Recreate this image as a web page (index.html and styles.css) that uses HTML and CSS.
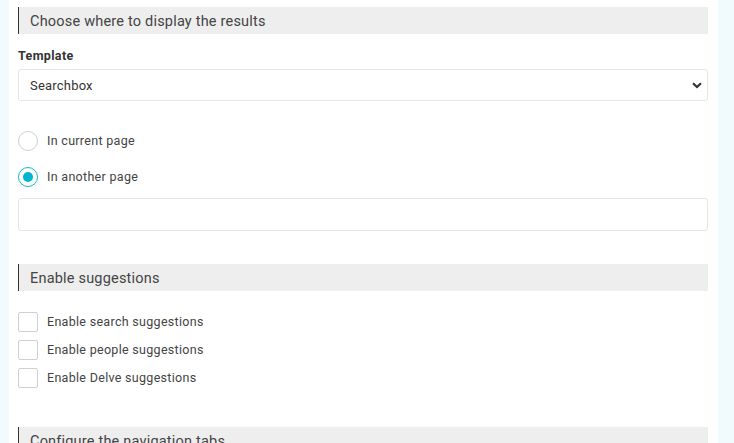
FILE: index.html
```html
<!DOCTYPE html>
<html lang="en">
<head>
<meta charset="utf-8">
<title>Search settings</title>
<link rel="stylesheet" href="styles.css">
</head>
<body>
<div class="page">
  <main class="panel">
    <h2 class="section-title">Choose where to display the results</h2>
    <div class="field">
      <label class="label">Template</label>
      <div class="select">
        <span>Searchbox</span>
        <svg class="chev" width="10" height="7" viewBox="0 0 10 7"><path d="M1 1.2 L5 5 L9 1.2" fill="none" stroke="#333" stroke-width="2.2"/></svg>
      </div>
    </div>
    <div class="radios">
      <div class="radio-row"><span class="radio"></span><span class="opt">In current page</span></div>
      <div class="radio-row"><span class="radio checked"></span><span class="opt">In another page</span></div>
    </div>
    <div class="input"></div>

    <h2 class="section-title s2">Enable suggestions</h2>
    <div class="checks">
      <div class="check-row"><span class="box"></span><span class="opt">Enable search suggestions</span></div>
      <div class="check-row"><span class="box"></span><span class="opt">Enable people suggestions</span></div>
      <div class="check-row"><span class="box"></span><span class="opt">Enable Delve suggestions</span></div>
    </div>

    <h2 class="section-title s3">Configure the navigation tabs</h2>
  </main>
</div>
</body>
</html>
```
FILE: styles.css
```css
html, body {
  margin: 0;
  padding: 0;
  background: #f1fafc;
  height: 100%;
  overflow: hidden;
}
body {
  font-family: Roboto, "Liberation Sans", sans-serif;
  color: #333;
}
.page {
  display: flex;
  height: 100%;
}
.panel {
  margin-left: 9px;
  width: 690px;
  background: #fff;
  padding: 7px 10px 0 9px;
  min-height: 100%;
}
.section-title {
  margin: 0;
  height: 25px;
  padding-top: 2px;
  background: #eeeeee;
  border-left: 1px solid #333;
  font-size: 14.5px;
  font-weight: 400;
  letter-spacing: 0.2px;
  color: #444;
  line-height: 26px;
  padding-left: 11px;
  overflow: visible;
}
.field {
  margin-top: 15px;
}
.label {
  display: block;
  font-size: 12.5px;
  font-weight: 700;
  letter-spacing: 0.35px;
  color: #333;
  line-height: 14px;
  margin-bottom: 6px;
}
.select {
  height: 30px;
  border: 1px solid #e6e6e6;
  border-radius: 3px;
  display: flex;
  align-items: center;
  justify-content: space-between;
  padding: 0 5px 0 11px;
  font-size: 13px;
  letter-spacing: 0.2px;
  color: #333;
}
.chev { margin-top: 1px; }
.radios {
  margin-top: 30px;
  display: flex;
  flex-direction: column;
  gap: 16px;
}
.radio-row, .check-row {
  display: flex;
  align-items: center;
  height: 20px;
}
.radio-row .opt { margin-top: -2px; }
.radio {
  width: 18px;
  height: 18px;
  border: 1px solid #d0d0d0;
  border-radius: 50%;
  margin-right: 9px;
  box-sizing: content-box;
  position: relative;
}
.radio.checked {
  border-color: #17b7d3;
}
.radio.checked::after {
  content: "";
  position: absolute;
  left: 4px;
  top: 4px;
  width: 10px;
  height: 10px;
  border-radius: 50%;
  background: #00b5d1;
}
.opt {
  font-size: 12.5px;
  letter-spacing: 0.3px;
  color: #444;
}
.input {
  margin-top: 11px;
  height: 31px;
  border: 1px solid #e6e6e6;
  border-radius: 3px;
}
.s2 { margin-top: 33px; }
.checks {
  margin-top: 21px;
  display: flex;
  flex-direction: column;
  gap: 8px;
}
.check-row .opt { margin-top: -1px; }
.box {
  border: 1px solid #d0d0d0;
  border-radius: 2px;
  margin-right: 9px;
  box-sizing: border-box;
  width: 20px;
  height: 20px;
}
.s3 { margin-top: 39px; }
```
